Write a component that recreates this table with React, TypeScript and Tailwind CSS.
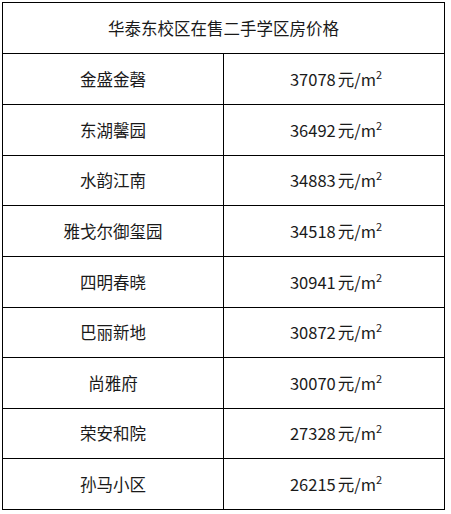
const rows = [
  { name: "金盛金磬", price: "37078", h: "h-[51px]" },
  { name: "东湖馨园", price: "36492", h: "h-[51px]" },
  { name: "水韵江南", price: "34883", h: "h-[50px]" },
  { name: "雅戈尔御玺园", price: "34518", h: "h-[51px]" },
  { name: "四明春晓", price: "30941", h: "h-[51px]" },
  { name: "巴丽新地", price: "30872", h: "h-[50px]" },
  { name: "尚雅府", price: "30070", h: "h-[51px]" },
  { name: "荣安和院", price: "27328", h: "h-[50px]" },
  { name: "孙马小区", price: "26215", h: "h-[51px]" },
];

export default function App() {
  return (
    <div className="min-h-[514px] w-[451px] bg-white pl-[2px] pt-[2px] font-['Microsoft_YaHei','Noto_Sans_CJK_SC',sans-serif] text-[16.5px] text-[#1a1a1a]">
      <div className="w-[443px] border-l border-t border-black">
        <div className="flex h-[51px] items-center justify-center border-b border-r border-black">
          华泰东校区在售二手学区房价格
        </div>
        {rows.map((r) => (
          <div key={r.name} className={`flex ${r.h}`}>
            <div className="flex w-[221px] items-center justify-center border-b border-r border-black">{r.name}</div>
            <div className="flex w-[221px] items-center justify-center border-b border-r border-black">
              <span className="pl-[4px]">
                {r.price}
                <span className="ml-[2px]">元/m</span>
                <span className="relative -top-[7px] text-[11px]">2</span>
              </span>
            </div>
          </div>
        ))}
      </div>
    </div>
  );
}
